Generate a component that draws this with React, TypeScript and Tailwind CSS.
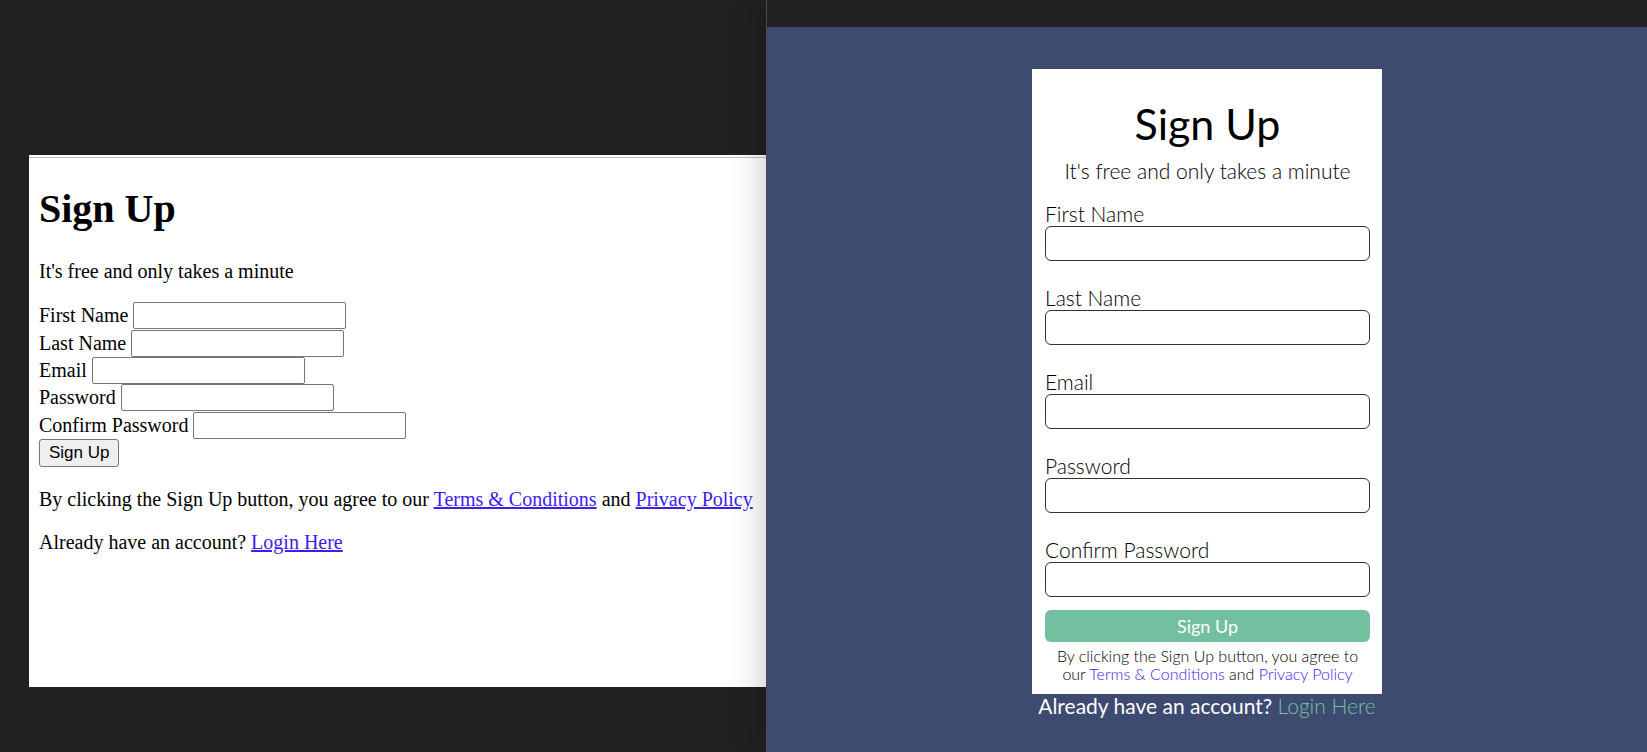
import React from 'react';

const fields = [
  { id: 'first-name', label: 'First Name', type: 'text' },
  { id: 'last-name', label: 'Last Name', type: 'text' },
  { id: 'email', label: 'Email', type: 'email' },
  { id: 'password', label: 'Password', type: 'password' },
  { id: 'confirm-password', label: 'Confirm Password', type: 'password' },
];

function PlainForm() {
  return (
    <section className="min-w-0 pl-[29px] pt-[155px] pb-[65px]">
      <div className="h-full bg-white pt-0.5 text-black">
        <div className="h-full border-t border-[#c4bfc4] pl-2.5 font-['Liberation_Serif',serif] text-[20px] leading-[23px]">
          <h1 className="pt-7 text-[40px] leading-[46px] font-bold">Sign Up</h1>
          <p className="pt-7">It's free and only takes a minute</p>
          <form className="pt-[19px]" onSubmit={(e) => e.preventDefault()}>
            <div className="grid h-[137px] grid-rows-5">
              {fields.map((f) => (
                <div key={f.id} className="flex items-center gap-[5px]">
                  <label htmlFor={`plain-${f.id}`}>{f.label}</label>
                  <input
                    id={`plain-${f.id}`}
                    type={f.type}
                    className="h-[27px] w-[213px] rounded-[2px] border border-[#767676] bg-white px-1 font-['Liberation_Sans',sans-serif] text-base"
                  />
                </div>
              ))}
            </div>
            <button
              type="submit"
              className="block h-7 rounded-[3px] border border-[#767676] bg-[#efefef] px-[9px] font-['Liberation_Sans',sans-serif] text-[17px] leading-5"
            >
              Sign Up
            </button>
          </form>
          <p className="pt-[21px] whitespace-nowrap">
            By clicking the Sign Up button, you agree to our{' '}
            <a href="#terms" className="text-[#3d1df0] underline decoration-2 underline-offset-1">Terms &amp; Conditions</a> and{' '}
            <a href="#privacy" className="text-[#3d1df0] underline decoration-2 underline-offset-1">Privacy Policy</a>
          </p>
          <p className="pt-5">
            Already have an account?{' '}
            <a href="#login" className="text-[#3d1df0] underline decoration-2 underline-offset-1">Login Here</a>
          </p>
        </div>
      </div>
    </section>
  );
}

function StyledForm() {
  return (
    <section className="relative flex min-w-0 flex-col border-l border-[#808080]/45 bg-clip-padding font-[Lato,sans-serif] shadow-[0_0_36px_rgba(0,0,0,0.24)]">
      <div className="h-[27px] bg-[#212121]" />
      <div className="flex flex-1 flex-col items-center bg-[#3e4b70] pt-[42px]">
        <div className="h-[625px] w-[350px] bg-white pr-3 pl-[13px] pt-[31px] font-light text-black">
          <h1 className="text-center text-[43px] leading-[48px] font-normal">Sign Up</h1>
          <p className="pt-[11px] text-center text-[21px] leading-6">It's free and only takes a minute</p>
          <form className="pt-[19px]" onSubmit={(e) => e.preventDefault()}>
            <div className="flex flex-col gap-[25px]">
              {fields.map((f) => (
                <div key={f.id} className="flex flex-col">
                  <label htmlFor={f.id} className="text-[21px] leading-6">{f.label}</label>
                  <input
                    id={f.id}
                    type={f.type}
                    className="h-[35px] w-full rounded-md border border-[#333333] bg-white px-2 text-base"
                  />
                </div>
              ))}
            </div>
            <button
              type="submit"
              className="mt-[13px] block h-8 w-full rounded-md bg-[#72c0a0] text-[18px] leading-5 font-normal text-white"
            >
              Sign Up
            </button>
          </form>
          <p className="pt-[5px] text-center text-[16px] leading-[18px]">
            By clicking the Sign Up button, you agree to
            <br />
            our <a href="#terms-2" className="text-[#3d1df0]">Terms &amp; Conditions</a> and{' '}
            <a href="#privacy-2" className="text-[#3d1df0]">Privacy Policy</a>
          </p>
        </div>
        <p className="text-[21px] leading-6 font-normal text-white">
          Already have an account? <a href="#login-2" className="font-light text-[#72c0a0]">Login Here</a>
        </p>
      </div>
    </section>
  );
}

export default function App() {
  return (
    <main className="grid min-h-screen grid-cols-[766fr_881fr] overflow-hidden bg-[#212121]">
      <PlainForm />
      <StyledForm />
    </main>
  );
}
